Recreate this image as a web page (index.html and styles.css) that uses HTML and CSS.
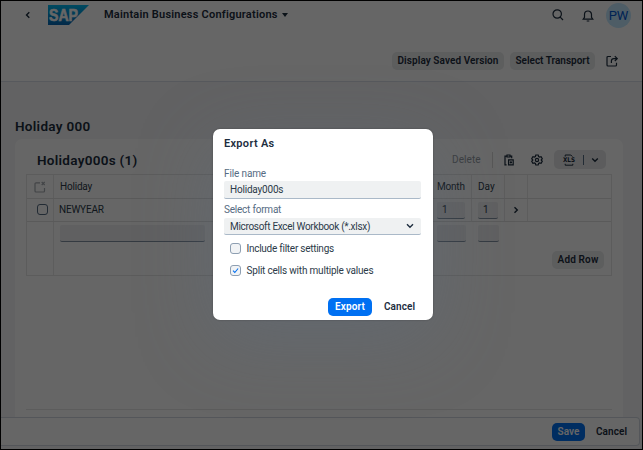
FILE: index.html
```html
<!DOCTYPE html>
<html lang="en">
<head>
<meta charset="utf-8">
<title>Maintain Business Configurations</title>
<link rel="stylesheet" href="styles.css">
</head>
<body>
<div class="app">
  <header class="shell">
    <svg class="back" viewBox="0 0 8 10"><path d="M5.3 2.2 2.5 5l2.8 2.8"/></svg>
    <svg class="logo" viewBox="0 0 41 20"><defs><linearGradient id="brand" x2="0" y2="1"><stop stop-color="#00b8f1"/><stop offset="1" stop-color="#0868b5"/></linearGradient></defs><path fill="url(#brand)" d="M0 0h41L21 20H0z"/><text x="1" y="15.8" textLength="29" lengthAdjust="spacingAndGlyphs">SAP</text></svg>
    <h1 class="app-title">Maintain Business Configurations</h1>
    <svg class="caret" viewBox="0 0 6 4"><path d="M0 0h6L3 4z"/></svg>
    <svg class="search" viewBox="0 0 12 12"><circle cx="5.2" cy="5" r="4.2"/><path d="m8.2 8.2 2.8 2.8"/></svg>
    <svg class="bell" viewBox="0 0 12 12"><path d="M1.2 9.2h9.6L9.5 7.3V4.5a3.5 3.5 0 0 0-7 0v2.8zM4.7 11h2.6"/></svg>
    <span class="avatar">PW</span>
  </header>
  <div class="actions">
    <button class="btn saved"><span>Display Saved Version</span></button>
    <button class="btn transport"><span>Select Transport</span></button>
    <svg class="share" viewBox="0 0 12 12"><path d="M5 1.5H2a1 1 0 0 0-1 1V10a1 1 0 0 0 1 1h7.5a1 1 0 0 0 1-1V7.8M5.4 8V6a2.4 2.4 0 0 1 2.4-2.4H11M8.8 1.2l2.4 2.4L8.8 6"/></svg>
  </div>
  <main class="content">
    <h2 class="section-title">Holiday 000</h2>
    <section class="card">
      <div class="toolbar">
        <h3>Holiday000s (1)</h3>
        <span class="delete">Delete</span>
        <i class="divider"></i>
        <svg class="paste" viewBox="0 0 10 12"><path d="M2.6 10.8H1V2.2h1.5M6.5 2.2h1.2v2M3 1h3v2H3zM4.6 5.8h4.6v5H4.6zM6.9 7.2v2.2M5.8 8.3H8"/></svg>
        <svg class="gear" viewBox="0 0 12 12"><path d="m4.8 1-.4 1.5-1 .6-1.5-.4-1.2 2L1.8 6 .7 7.3l1.2 2 1.5-.4 1 .6.4 1.5h2.4l.4-1.5 1-.6 1.5.4 1.2-2L10.2 6l1.1-1.3-1.2-2-1.5.4-1-.6L7.2 1z"/><circle cx="6" cy="6" r="1.6"/></svg>
        <div class="split">
          <svg class="xls" viewBox="0 0 14 12"><path d="M3.2 2.6V1h5.6l1.6 1.6M3.2 9.8v1.4h7.6V9.8"/><text x="1" y="8.3" textLength="12" lengthAdjust="spacingAndGlyphs">XLS</text></svg>
          <i></i>
          <svg class="down" viewBox="0 0 8 6"><path d="m1.2 1.4 2.8 2.8 2.8-2.8"/></svg>
        </div>
      </div>
      <div class="table">
        <div class="row head">
          <div class="cell pick"><svg class="clear" viewBox="0 0 12 12"><path d="M6 1.8H2a1 1 0 0 0-1 1V10a1 1 0 0 0 1 1h7.5a1 1 0 0 0 1-1V7M7.7 1l3 3m0-3-3 3"/></svg></div>
          <div class="cell"><span class="t-holiday">Holiday</span></div>
          <div class="cell month"><span class="t-month">Month</span></div>
          <div class="cell"><span>Day</span></div>
          <div class="cell"></div><div class="cell"></div>
        </div>
        <div class="row data">
          <div class="cell pick"><i class="check"></i></div>
          <div class="cell"><span class="t-new">NEWYEAR</span></div>
          <div class="cell month"><span class="field">1</span></div>
          <div class="cell"><span class="field">1</span></div>
          <div class="cell nav"><svg viewBox="0 0 6 8"><path d="m1.5 1.2 2.8 2.8-2.8 2.8"/></svg></div><div class="cell"></div>
        </div>
        <div class="row create">
          <div class="cell pick"></div>
          <div class="cell"><span class="field"></span></div>
          <div class="cell month"><span class="field"></span></div>
          <div class="cell"><span class="field"></span></div>
          <div class="cell add"><button class="btn"><span>Add Row</span></button></div>
        </div>
      </div>
      <div class="card-end"></div>
    </section>
  </main>
  <footer class="footer"><button class="btn primary"><span>Save</span></button><span class="cancel">Cancel</span></footer>
</div>
<div class="overlay">
  <div class="dialog" role="dialog">
    <h2>Export As</h2>
    <label class="lab-file"><span>File name</span></label>
    <div class="input"><span class="v-file">Holiday000s</span></div>
    <label class="lab-format"><span>Select format</span></label>
    <div class="input select"><span class="v-format">Microsoft Excel Workbook (*.xlsx)</span><svg viewBox="0 0 8 6"><path d="m1 1.2 3 3 3-3"/></svg></div>
    <div class="option"><i class="check"></i><span class="o-filter">Include filter settings</span></div>
    <div class="option"><i class="check"><svg viewBox="0 0 9 9"><path d="m2 4.7 1.8 1.8 3.3-4"/></svg></i><span class="o-split">Split cells with multiple values</span></div>
    <div class="buttons"><button class="btn primary"><span>Export</span></button><span class="cancel">Cancel</span></div>
  </div>
</div>
</body>
</html>
```
FILE: styles.css
```css
* { box-sizing: border-box; }
body { margin: 0; width: 643px; height: 450px; overflow: hidden; font: 10px/14px Roboto, "Liberation Sans", sans-serif; color: #2c3a49; background: #f5f6f7; }
h1, h2, h3 { margin: 0; font-weight: 600; white-space: nowrap; color: #1d2d3e; }
svg { display: block; flex: none; fill: none; stroke: #1d2d3e; stroke-width: 1.2; }
span { white-space: nowrap; }
.app { height: 450px; border: 1px solid #000; display: flex; flex-direction: column; background: #f5f6f7; }
.shell { height: 27px; flex: none; display: flex; align-items: center; background: #fff; padding-right: 11px; }
.back { width: 8px; height: 10px; margin-left: 23px; stroke-width: 1.4; }
.logo { width: 41px; height: 20px; margin-left: 16px; margin-top: 1px; stroke: none; }
.logo text { font: bold 16px "Liberation Sans", sans-serif; fill: #fff; stroke: #fff; stroke-width: .6; }
.app-title { margin-left: 15px; font-size: 11px; width: 174px; letter-spacing: .22px; }
.caret { width: 6px; height: 4px; margin-left: 4px; fill: #1d2d3e; stroke: none; }
.search { width: 12px; height: 12px; margin-left: auto; }
.bell { width: 12px; height: 12px; margin: 2px 12px 0 18px; }
.avatar { width: 25px; height: 25px; border-radius: 50%; background: #c2e8ff; color: #0057d2; font-size: 13px; line-height: 26px; text-align: center; margin-top: 1px; }
.actions { height: 54px; flex: none; display: flex; justify-content: flex-end; gap: 6px; padding: 24px 24px 0 0; background: #fff; border-bottom: 1px solid #d9dfe8; }
.btn { height: 18px; padding: 0; border: 0; border-radius: 5px; background: #e9eaeb; color: #1d2d3e; font: 600 10px/18px Roboto, sans-serif; flex: none; }
.saved { width: 112px; letter-spacing: .08px; } .transport { width: 85px; }
.share { width: 12px; height: 12px; margin: 3px 0 0 5px; }
.content { flex: 1; padding: 36px 19px 0 14px; min-height: 0; }
.section-title { font-size: 13.5px; line-height: 16px; height: 21px; letter-spacing: .3px; }
.card { height: 278px; background: #fff; border-radius: 7px 7px 0 0; padding: 0 11px; }
.toolbar { height: 35px; padding-top: 6px; display: flex; align-items: center; }
.toolbar h3 { font-size: 13.5px; margin-left: 11px; letter-spacing: .29px; margin-right: auto; }
.delete { color: #9299a0; width: 28px; letter-spacing: .1px; }
.divider { width: 1px; height: 16px; background: #d9d9d9; margin: 0 11px 0 12px; }
.paste { width: 10px; height: 12px; margin-right: 17px; }
.gear { width: 12px; height: 12px; margin-right: 11px; }
.split { width: 52px; height: 19px; border-radius: 5px; background: #e5e6e8; display: flex; align-items: center; padding-left: 8px; margin-right: 6px; }
.split i { width: 1px; height: 10px; background: #556b82; margin: 0 7px; }
.xls { width: 14px; height: 12px; stroke-width: 1; }
.xls text { font: bold 6.4px "DejaVu Sans", sans-serif; fill: #1d2d3e; stroke: none; }
.down { width: 8px; height: 6px; stroke-width: 1.4; }
.table { border: 1px solid #e5e5e5; height: 102px; }
.row { display: grid; grid-template-columns: 27px 377px 41px 33px 23px 1fr; border-bottom: 1px solid #e0e0e0; }
.head { height: 24px; } .data { height: 23px; } .create { height: 53px; border: 0; }
.cell { border-right: 1px solid #e8e8e8; padding: 0 6px; display: flex; align-items: center; }
.cell:last-child { border: 0; }
.pick { justify-content: center; padding: 0; }
.t-holiday, .t-month { letter-spacing: -.2px; }
.t-new { letter-spacing: -.2px; margin-left: -1px; }
.clear { width: 12px; height: 12px; stroke: #a6abb1; }
.check { width: 11px; height: 11px; flex: none; border: 1px solid #8e9fb2; border-radius: 3px; background: #f1f3f5; display: block; }
.pick .check { margin-left: 4px; margin-top: -1px; background: none; border-color: #556b82; }
.field { height: 17px; width: 100%; line-height: 16px; background: #eff1f2; border-bottom: 1px solid #8292a3; border-radius: 2px; padding-left: 5px; }
.nav { justify-content: center; }
.nav svg { width: 6px; height: 8px; stroke-width: 1.4; }
.create .cell { align-items: flex-start; padding-top: 3px; border-right: 0; }
.create .pick { border-right: 1px solid #e8e8e8; }
.create .cell:nth-child(2) .field { width: 145px; }
.create .add { grid-column: 5 / 7; justify-content: flex-end; padding: 29px 7px 0 0; }
.add .btn { width: 52px; letter-spacing: .15px; }
.card-end { height: 134px; border-bottom: 1px solid #e5e5e5; }
.footer { height: 29px; flex: none; margin: 0 2px 3px 0; border: 1px solid #d1d8e0; border-left: 0; border-radius: 0 4px 4px 0; background: #fff; display: flex; align-items: center; justify-content: flex-end; padding-right: 11px; }
.primary { background: #0070f2; color: #fff; }
.footer .primary { width: 33px; margin-right: 11px; letter-spacing: .1px; }
.cancel { font-weight: 600; width: 32px; color: #1d2d3e; letter-spacing: .08px; }
.overlay { position: absolute; inset: 0; background: rgba(0, 0, 0, .6); }
.dialog { width: 220px; height: 191px; margin: 129px 0 0 213px; padding: 8px 12px 0 11px; border-radius: 7px; background: #fff; box-shadow: 0 0 2px rgba(0, 0, 0, .3), 0 18px 75px rgba(95, 111, 130, .38); }
.dialog h2 { font-size: 11px; height: 30px; letter-spacing: .3px; }
.dialog label { display: block; height: 14px; color: #556b82; letter-spacing: -.13px; }
.dialog .lab-format { padding-top: 4px; height: 19px; letter-spacing: -.22px; }
.input { height: 18px; line-height: 17px; padding: 0 7px 0 6px; border-bottom: 1px solid #aab9c8; border-radius: 2px; background: #eff1f2; }
.select { display: flex; align-items: center; justify-content: space-between; height: 17px; }
.select svg { width: 8px; height: 6px; stroke-width: 1.4; }
.v-file { letter-spacing: -.2px; }
.v-format { letter-spacing: -.31px; }
.o-filter { letter-spacing: -.26px; }
.o-split { letter-spacing: -.2px; }
.option { height: 22px; display: flex; align-items: center; gap: 6px; padding-left: 6px; }
.select + .option { margin-top: 3px; }
.check svg { width: 9px; height: 9px; stroke: #0070f2; stroke-width: 1.1; }
.option .check { margin-top: -1px; margin-left: -.5px; }
.buttons { display: flex; align-items: center; justify-content: flex-end; margin-top: 16px; padding-right: 5px; }
.buttons .primary { width: 44px; margin-right: 12px; letter-spacing: .1px; }
```
